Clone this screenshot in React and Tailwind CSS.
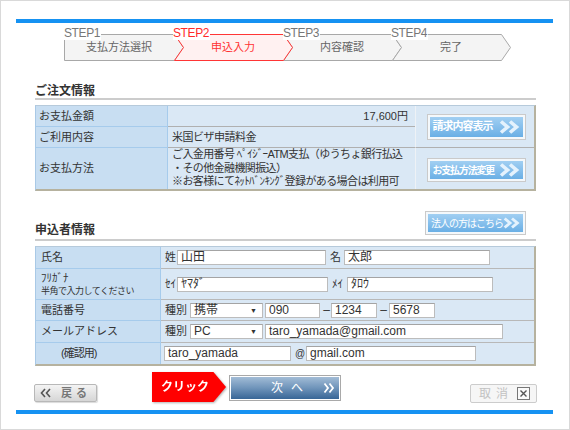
import React from 'react';

const STEPS = [
  { n: 'STEP1', t: '支払方法選択', lab: 'left-0', box: 'w-[110px]' },
  { n: 'STEP2', t: '申込入力', on: true, lab: 'left-[109px]', box: 'w-[109px] pl-[9px]' },
  { n: 'STEP3', t: '内容確認', lab: 'left-[219px]', box: 'w-[109px] pl-[9px]' },
  { n: 'STEP4', t: '完了', lab: 'left-[327px]', box: 'w-[109px] pl-[9px]' },
];
const XS = [0, 110, 219, 328, 437];

function stepPoints(i) {
  const a = XS[i] + 0.5;
  const b = XS[i + 1] + 0.5;
  const pts = [[a, 0.5], [b, 0.5], [b + 9, 13.5], [b, 26.5], [a, 26.5]];
  if (i > 0) pts.push([a + 9, 13.5]);
  return pts.map((p) => p.join(',')).join(' ');
}

function StepBar() {
  return (
    <div className="relative mt-[5px] ml-[63px] h-[32px] w-[447px]">
      <svg className="absolute left-0 top-[6px] overflow-visible" width="448" height="28" aria-hidden>
        {[0, 2, 3].map((i) => (
          <polygon key={i} points={stepPoints(i)} fill="#f4f4f4" stroke="#a8a8a8" strokeWidth="1" />
        ))}
        <polygon points={stepPoints(1)} fill="#fff1f1" stroke="#ff3535" strokeWidth="1" />
      </svg>
      <div className="absolute left-0 top-[6px] flex h-[27px]">
        {STEPS.map((s) => (
          <div key={s.n} className={`flex items-center justify-center text-[11px] ${s.box} ${s.on ? 'text-[#ff3333]' : 'text-[#666]'}`}>
            {s.t}
          </div>
        ))}
      </div>
      {STEPS.map((s) => (
        <div
          key={s.n}
          className={`absolute top-[-1px] bg-white pr-[1px] text-[12px] leading-[13px] tracking-[-0.4px] ${s.lab} ${s.on ? 'text-[#ff2a2a]' : 'text-[#777]'}`}
        >
          {s.n}
        </div>
      ))}
    </div>
  );
}

function Chevrons({ color = '#e4f2fd' }) {
  return (
    <svg width="22" height="14" viewBox="0 0 22 14" aria-hidden>
      <path d="M2 1.5 L8.5 7 L2 12.5" fill="none" stroke={color} strokeWidth="3.6" />
      <path d="M11 1.5 L17.5 7 L11 12.5" fill="none" stroke={color} strokeWidth="3.6" />
    </svg>
  );
}

function BlueBtn({ children, size, text }) {
  return (
    <div className={`border border-[#cacaca] bg-[#f4f8fb] p-[2px] ${size}`}>
      <div className="flex h-full items-center justify-between bg-gradient-to-b from-[#a1cff2] to-[#6aafe5] pl-[3px] pr-[2px]">
        <span className={`whitespace-nowrap text-white ${text}`}>{children}</span>
        <Chevrons />
      </div>
    </div>
  );
}

function Field({ w, children, cls = '' }) {
  return (
    <div className={`h-[15px] shrink-0 whitespace-nowrap border border-[#bcbcbc] border-t-[#a4a4a4] bg-white pl-[3px] text-[12px] leading-[13px] text-[#333] ${w} ${cls}`}>
      {children}
    </div>
  );
}

function Select({ children }) {
  return (
    <div className="ml-[3px] flex h-[15px] w-[73px] shrink-0 items-center justify-between border border-[#bcbcbc] border-t-[#a4a4a4] bg-white pl-[3px] pr-[5px] text-[12px] leading-[13px] text-[#333]">
      <span>{children}</span>
      <span className="text-[7px] text-[#333]">▼</span>
    </div>
  );
}

const LABEL = 'flex items-center bg-[#c8def2] border-r border-r-[#a6cbec]';
const VALUE = 'flex items-center bg-[#dae8f5]';

function OrderTable() {
  return (
    <div className="mt-[5px] grid grid-cols-[132px_247px_1fr] grid-rows-[21px_21px_41px] border-t border-l border-t-[#b6cadb] border-l-[#a9c9e6] border-r-2 border-b-2 border-r-[#b6b29f] border-b-[#b6b29f] text-[11px] text-[#333]">
      <div className={`${LABEL} border-b border-b-[#a6cbec] pl-[3px]`}>お支払金額</div>
      <div className={`${VALUE} justify-end border-b border-b-[#b0b0b0] pr-[7px]`}>17,600円</div>
      <div className={`${VALUE} row-span-2 justify-center border-l border-l-[#eef2f6] border-b border-b-[#b0b0b0] pl-[2px]`}>
        <BlueBtn size="w-[99px] h-[26px]" text="text-[11px] font-bold tracking-[-1px]">請求内容表示</BlueBtn>
      </div>
      <div className={`${LABEL} border-b border-b-[#a6cbec] pl-[3px]`}>ご利用内容</div>
      <div className={`${VALUE} border-b border-b-[#b0b0b0] pl-[4px] tracking-[-0.5px]`}>米国ビザ申請料金</div>
      <div className={`${LABEL} pl-[3px]`}>お支払方法</div>
      <div className={`${VALUE} whitespace-nowrap pl-[4px] leading-[13.5px] tracking-[-0.6px]`}>
        <div>
          ご入金用番号 ﾍﾟｲｼﾞｰATM支払（ゆうちょ銀行払込
          <br />
          ・その他金融機関振込）
          <br />
          ※お客様にてﾈｯﾄﾊﾞﾝｷﾝｸﾞ登録がある場合は利用可
        </div>
      </div>
      <div className={`${VALUE} justify-center border-l border-l-[#eef2f6] pl-[2px] pt-[3px]`}>
        <BlueBtn size="w-[99px] h-[24px]" text="text-[10px] font-bold tracking-[-1.2px]">お支払方法変更</BlueBtn>
      </div>
    </div>
  );
}

function Dash() {
  return <span className="w-[9px] shrink-0 text-center text-[12px] text-[#333]">–</span>;
}

function ApplicantTable() {
  const lb = `${LABEL} border-b border-b-[#a6cbec] pl-[5px]`;
  const vl = `${VALUE} border-b border-b-[#b8b8b8] pl-[4px]`;
  return (
    <div className="mt-[5px] grid grid-cols-[125px_1fr] grid-rows-[22px_31px_21px_22px_21px] border-t border-l border-t-[#b6cadb] border-l-[#a9c9e6] border-r-2 border-b-2 border-r-[#b6b29f] border-b-[#b6b29f] text-[11px] text-[#333]">
      <div className={lb}>氏名</div>
      <div className={vl}>
        <span className="w-[11px] shrink-0">姓</span>
        <Field w="w-[149px]" cls="ml-[1px]">山田</Field>
        <span className="ml-[4px] w-[11px] shrink-0">名</span>
        <Field w="w-[146px]" cls="ml-[3px]">太郎</Field>
      </div>

      <div className={`${lb} flex-col !items-start justify-center leading-[13px]`}>
        <span>ﾌﾘｶﾞﾅ</span>
        <span className="text-[9px] leading-[12px] tracking-[-0.5px]">半角で入力してください</span>
      </div>
      <div className={vl}>
        <span className="w-[11px] shrink-0">ｾｲ</span>
        <Field w="w-[151px]" cls="ml-[1px]">ﾔﾏﾀﾞ</Field>
        <span className="ml-[4px] w-[11px] shrink-0">ﾒｲ</span>
        <Field w="w-[146px]" cls="ml-[4px]">ﾀﾛｳ</Field>
      </div>

      <div className={lb}>電話番号</div>
      <div className={vl}>
        <span className="w-[22px] shrink-0">種別</span>
        <Select>携帯</Select>
        <Field w="w-[55px]" cls="ml-[2px]">090</Field>
        <span className="ml-[2px]" />
        <Dash />
        <Field w="w-[46px]">1234</Field>
        <span className="ml-[2px]" />
        <Dash />
        <Field w="w-[46px]" cls="ml-[1px]">5678</Field>
      </div>

      <div className={lb}>メールアドレス</div>
      <div className={vl}>
        <span className="w-[22px] shrink-0">種別</span>
        <Select>PC</Select>
        <Field w="w-[238px]" cls="ml-[2px]">taro_yamada@gmail.com</Field>
      </div>

      <div className={`${LABEL} pl-[25px] tracking-[-1px]`}>(確認用)</div>
      <div className={`${VALUE} pl-[3px]`}>
        <Field w="w-[127px]">taro_yamada</Field>
        <span className="ml-[4px] w-[10px] shrink-0 text-[10px]">@</span>
        <Field w="w-[170px]" cls="ml-[1px]">gmail.com</Field>
      </div>
    </div>
  );
}

function BottomRow() {
  return (
    <div className="mt-[6px] flex h-[31px] items-end">
      <div className="mb-[1px] ml-[33px] flex h-[18px] w-[63px] items-center rounded-[2px] border border-[#b8b8b8] bg-gradient-to-b from-[#f4f4f4] to-[#d6d6d6] pl-[5px] shadow-[1px_1px_1px_rgba(0,0,0,0.15)]">
        <svg width="14" height="10" viewBox="0 0 14 10" aria-hidden>
          <path d="M5 1 L1.5 5 L5 9 M10 1 L6.5 5 L10 9" fill="none" stroke="#555" strokeWidth="1.6" />
        </svg>
        <span className="ml-[7px] whitespace-nowrap text-[11px] font-bold tracking-[4px] text-[#777]">戻る</span>
      </div>

      <div className="mb-[1px] ml-[55px] drop-shadow-[1px_1px_1px_rgba(0,0,0,0.3)]">
        <div className="flex h-[30px] w-[74px] items-center bg-[#ff0000] pl-[9px] text-[12px] font-bold text-white [clip-path:polygon(0_0,83%_0,100%_50%,83%_100%,0_100%)]">
          クリック
        </div>
      </div>

      <div className="mb-[2px] ml-[3px] h-[26px] w-[112px] border border-[#a9a9a9] bg-white p-[1px]">
        <div className="flex h-full items-center bg-gradient-to-b from-[#a2bcd6] via-[#6f94ba] to-[#386696] pl-[40px]">
          <span className="whitespace-nowrap text-[12px] tracking-[8px] text-white">次へ</span>
          <svg className="ml-[12px]" width="12" height="12" viewBox="0 0 12 12" aria-hidden>
            <path d="M1.5 1.5 L5 6 L1.5 10.5 M6.5 1.5 L10 6 L6.5 10.5" fill="none" stroke="#fff" strokeWidth="1.8" />
          </svg>
        </div>
      </div>

      <div className="ml-[129px] flex h-[19px] w-[67px] items-center rounded-[2px] border border-[#cccccc] bg-[#f6f6f6] pl-[8px]">
        <span className="whitespace-nowrap text-[12px] tracking-[5px] text-[#c2c2c2]">取消</span>
        <svg className="ml-[4px]" width="13" height="13" viewBox="0 0 13 13" aria-hidden>
          <rect x="0.5" y="0.5" width="12" height="12" fill="#fafafa" stroke="#777" />
          <path d="M3.5 3.5 L9.5 9.5 M9.5 3.5 L3.5 9.5" stroke="#555" strokeWidth="1.4" />
        </svg>
      </div>
    </div>
  );
}

export default function App() {
  return (
    <div className="flex h-[430px] w-[570px] flex-col border border-[#d9d9d9] bg-white font-['Liberation_Sans','Noto_Sans_CJK_JP',sans-serif]">
      <div className="ml-[15px] mt-[18px] h-[4px] w-[537px] bg-[#1692f2]" />
      <StepBar />

      <div className="ml-[34px] w-[501px]">
        <div className="mt-[25px] h-[15px] border-b-2 border-[#cccccc] text-[12px] font-bold leading-[13px] text-[#333]">
          ご注文情報
        </div>
        <OrderTable />

        <div className="mt-[20px] flex h-[30px] items-end justify-between border-b-2 border-[#cccccc]">
          <span className="pb-[1px] text-[12px] font-bold leading-[15px] text-[#333]">申込者情報</span>
          <div className="mb-[4px] mr-[10px]">
            <BlueBtn size="w-[101px] h-[24px]" text="text-[10px] tracking-[-1px]">法人の方はこちら</BlueBtn>
          </div>
        </div>
        <ApplicantTable />
      </div>

      <BottomRow />
      <div className="ml-[15px] mt-[7px] h-[4px] w-[537px] bg-[#1692f2]" />
    </div>
  );
}
